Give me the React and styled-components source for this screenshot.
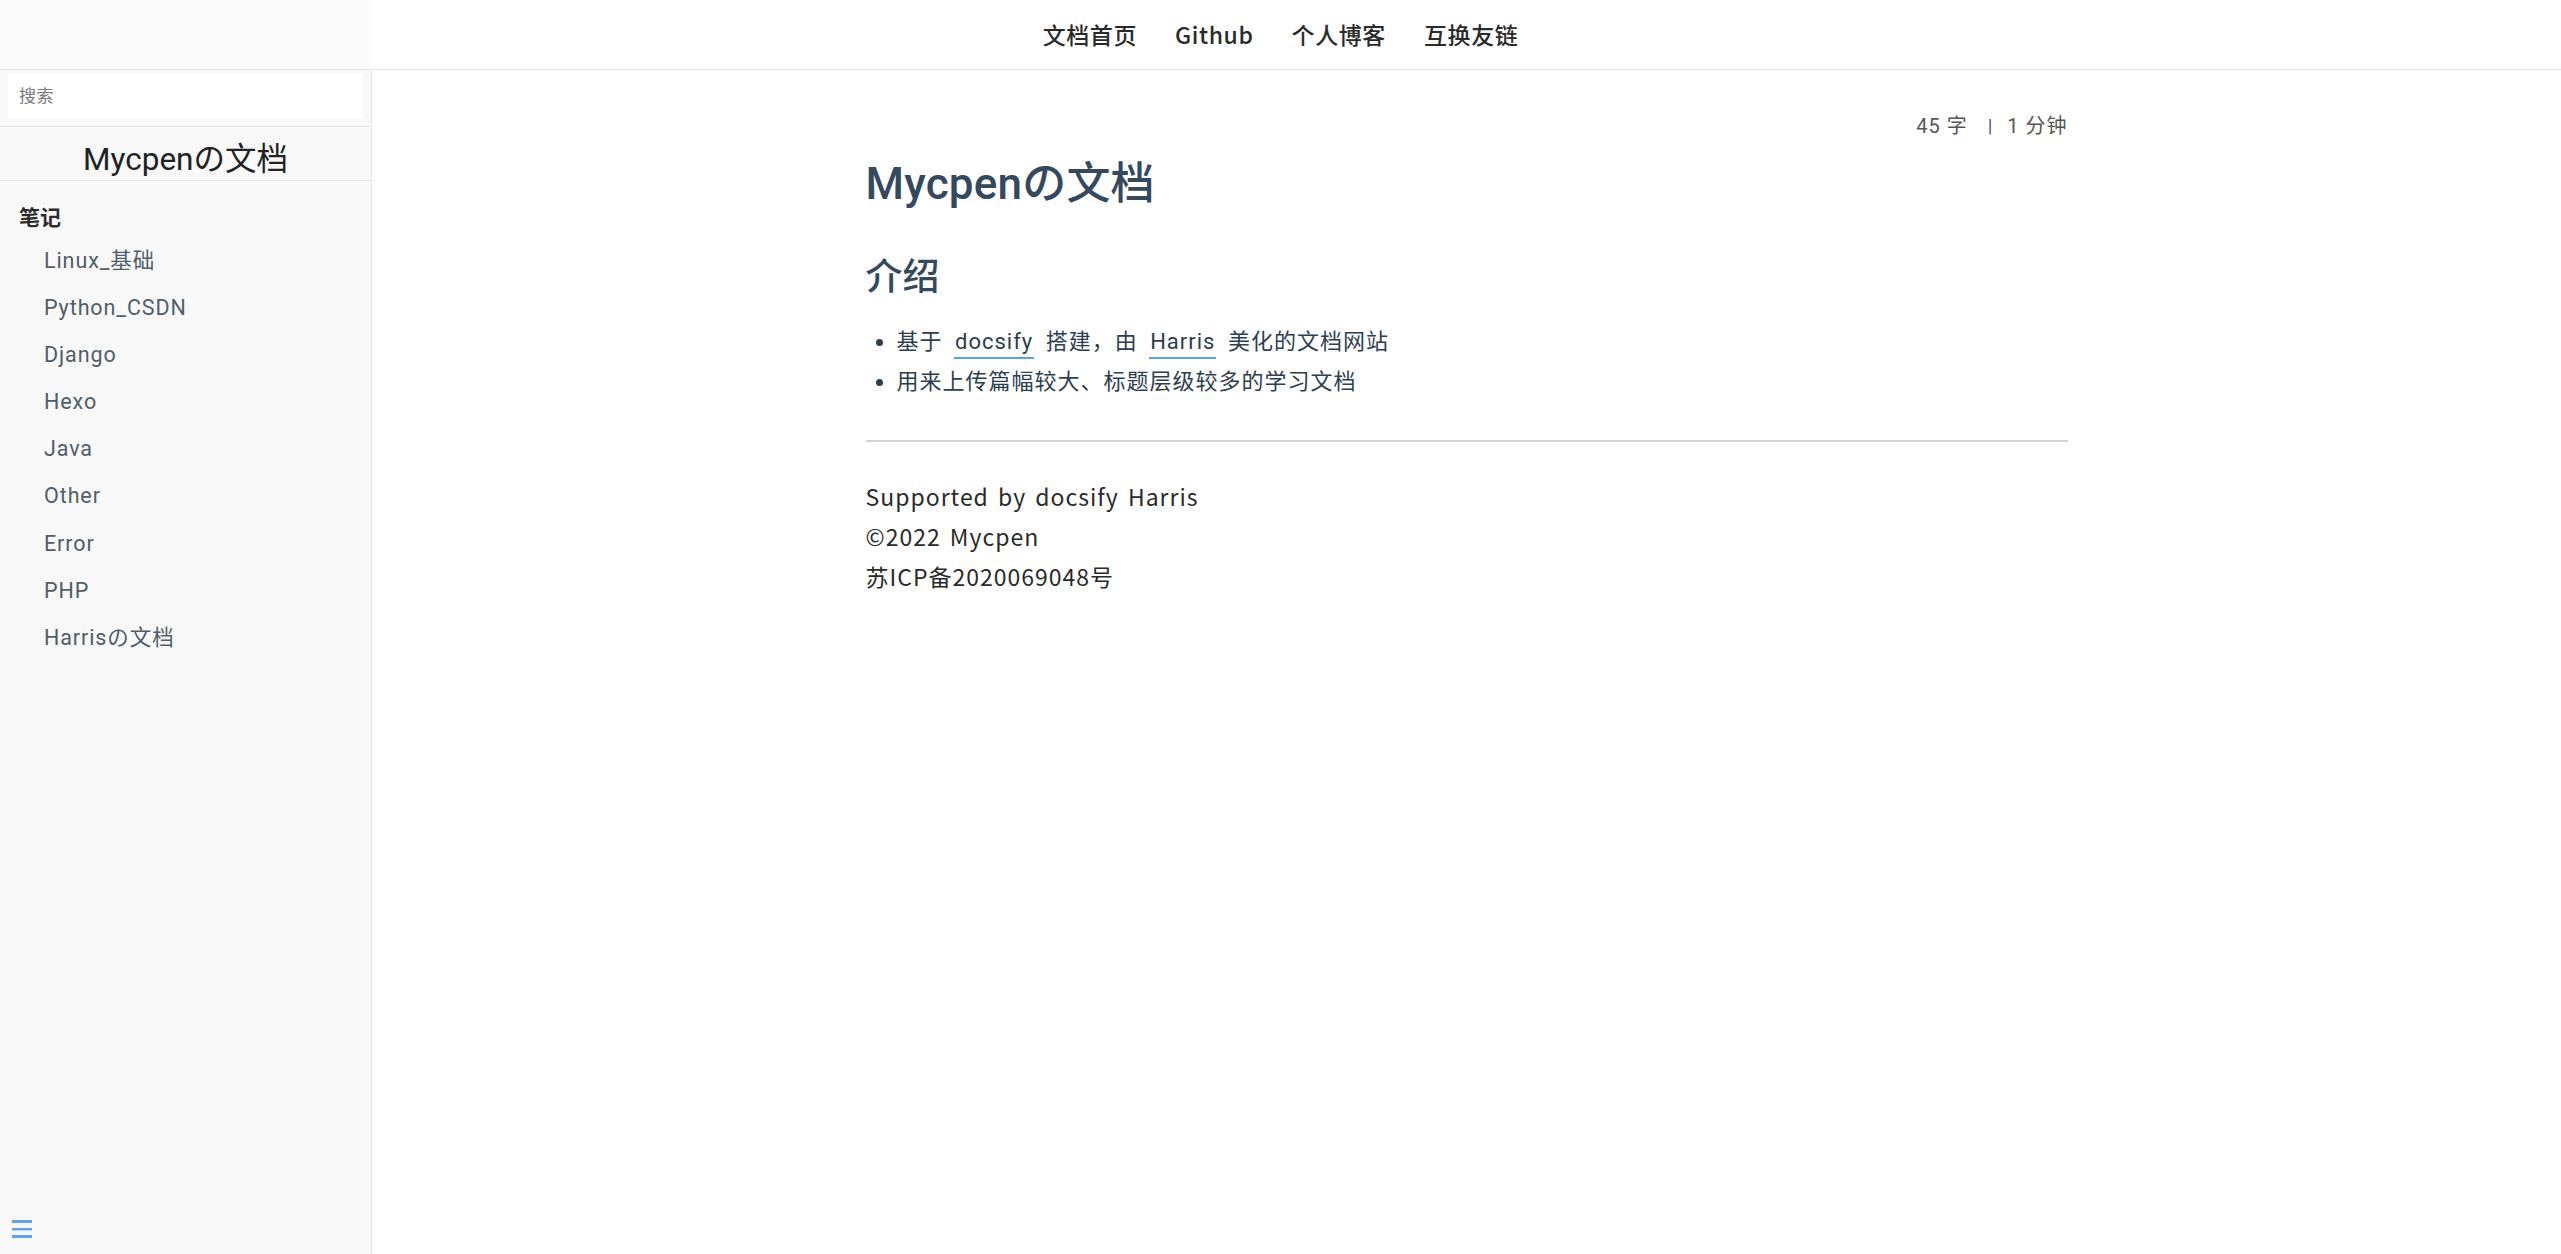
import styled, { createGlobalStyle } from 'styled-components';

const GlobalStyle = createGlobalStyle`
  html,
  body {
    margin: 0;
    padding: 0;
    background: #fff;
  }
  body {
    font-family: Roboto, 'Noto Sans CJK SC', sans-serif;
    -webkit-font-smoothing: antialiased;
  }
  #root {
    height: 100vh;
  }
`;

const Page = styled.div`
  display: flex;
  flex-direction: column;
  height: 100vh;
  overflow: hidden;
`;

const TopBar = styled.nav`
  flex-shrink: 0;
  box-sizing: border-box;
  height: 70px;
  padding-bottom: 2px;
  display: flex;
  align-items: center;
  justify-content: center;
  gap: 38px;
  border-bottom: 1px solid #dfe5ee;
  background: linear-gradient(to right, #fbfbfb 372px, #fff 372px);
`;

const NavLink = styled.a`
  display: block;
  line-height: 30px;
  font-family: 'Noto Sans CJK SC', Roboto, sans-serif;
  font-size: 23px;
  font-weight: 500;
  color: #2a2a2a;
  letter-spacing: 0.6px;
  text-decoration: none;
  cursor: pointer;
`;

const Body = styled.div`
  flex: 1;
  display: flex;
  min-height: 0;
`;

const Sidebar = styled.aside`
  width: 371px;
  flex-shrink: 0;
  display: flex;
  flex-direction: column;
  background: #f8f8f8;
  border-right: 1px solid #e6e6e6;
`;

const SearchWrap = styled.div`
  padding: 3px 8px 8px 8px;
  border-bottom: 1px solid #e6e6e6;
`;

const SearchInput = styled.input`
  display: block;
  box-sizing: border-box;
  width: 100%;
  height: 45px;
  border: none;
  outline: none;
  background: #fff;
  padding: 0 11px;
  font-family: Roboto, 'Noto Sans CJK SC', sans-serif;
  font-size: 17px;
  letter-spacing: 0.5px;
  color: #333;

  &::placeholder {
    color: #7a7a7a;
  }
`;

const SiteTitle = styled.h1`
  margin: 0;
  padding-top: 12px;
  line-height: 41px;
  font-size: 31.5px;
  font-weight: 400;
  color: #222;
  text-align: center;
  border-bottom: 1px solid #e6e6e6;
`;

const SectionLabel = styled.p`
  margin: 22px 0 0;
  padding-left: 19px;
  line-height: 30px;
  font-size: 21px;
  font-weight: 700;
  color: #2c2c2c;
`;

const NavList = styled.ul`
  list-style: none;
  margin: 0;
  padding: 4px 0 0;
`;

const NavItem = styled.li`
  padding-left: 44px;
  line-height: 47.1px;
  font-size: 21.5px;
  letter-spacing: 0.9px;
  color: #505d6b;
`;

const Toggle = styled.button`
  margin-top: auto;
  align-self: flex-start;
  border: none;
  background: none;
  padding: 0 0 16px 12px;
  display: flex;
  cursor: pointer;
`;

const Main = styled.main`
  flex: 1;
  min-width: 0;
  background: #fff;
`;

const Column = styled.section`
  width: 1202px;
  margin: 0 auto;
  padding-top: 41px;
`;

const WordCount = styled.div`
  display: flex;
  justify-content: flex-end;
  align-items: center;
  line-height: 30px;
  font-size: 20px;
  letter-spacing: 1px;
  color: #555;
`;

const Divider = styled.span`
  margin: 0 14px 0 20px;
  font-size: 19px;
`;

const Heading = styled.h1`
  margin: 13px 0 0;
  font-size: 44px;
  line-height: 60px;
  font-weight: 500;
  color: #34495e;
  letter-spacing: 0.2px;
`;

const SubHeading = styled.h2`
  margin: 39px 0 0;
  font-size: 37px;
  line-height: 50px;
  font-weight: 500;
  color: #34495e;
`;

const List = styled.ul`
  list-style: none;
  margin: 19px 0 0;
  padding: 0;
`;

const ListItem = styled.li`
  display: flex;
  align-items: center;
  line-height: 40px;
  font-size: 22px;
  letter-spacing: 1px;
  color: #2c3e50;

  &::before {
    content: '';
    width: 7px;
    height: 7px;
    border-radius: 50%;
    background: #2c3e50;
    margin: 0 14px 0 10px;
    flex-shrink: 0;
  }
`;

const TextLink = styled.a`
  color: #2c3e50;
  text-decoration: none;
  margin: 0 5px;
  padding: 0 1px 3px;
  border-bottom: 2px solid #5a9cf8;
`;

const Rule = styled.hr`
  margin: 38px 0 0;
  height: 2px;
  border: none;
  background: #d2d2d2;
`;

const Footer = styled.footer`
  margin-top: 34px;
  font-family: 'Noto Sans CJK SC', Roboto, sans-serif;
  font-size: 23px;
  line-height: 40px;
  color: #2a2a2a;
  letter-spacing: 1px;
  word-spacing: 3px;
`;

const FooterLine = styled.div``;

const navLinks = ['文档首页', 'Github', '个人博客', '互换友链'];
const docs = [
  'Linux_基础',
  'Python_CSDN',
  'Django',
  'Hexo',
  'Java',
  'Other',
  'Error',
  'PHP',
  'Harrisの文档',
];

function MenuIcon() {
  return (
    <svg width="20" height="18" viewBox="0 0 20 18" fill="#5fa2f9">
      <rect x="0" y="0" width="20" height="3" />
      <rect x="0" y="8" width="20" height="2.4" />
      <rect x="0" y="15" width="20" height="3" />
    </svg>
  );
}

export default function App() {
  return (
    <Page>
      <GlobalStyle />
      <TopBar>
        {navLinks.map((label) => (
          <NavLink key={label}>{label}</NavLink>
        ))}
      </TopBar>
      <Body>
        <Sidebar>
          <SearchWrap>
            <SearchInput type="search" placeholder="搜索" />
          </SearchWrap>
          <SiteTitle>Mycpenの文档</SiteTitle>
          <SectionLabel>笔记</SectionLabel>
          <NavList>
            {docs.map((name) => (
              <NavItem key={name}>{name}</NavItem>
            ))}
          </NavList>
          <Toggle aria-label="toggle sidebar">
            <MenuIcon />
          </Toggle>
        </Sidebar>
        <Main>
          <Column>
            <WordCount>
              <span>45 字</span>
              <Divider>|</Divider>
              <span>1 分钟</span>
            </WordCount>
            <Heading>Mycpenの文档</Heading>
            <SubHeading>介绍</SubHeading>
            <List>
              <ListItem>
                <span>
                  基于 <TextLink>docsify</TextLink> 搭建，由{' '}
                  <TextLink>Harris</TextLink> 美化的文档网站
                </span>
              </ListItem>
              <ListItem>
                <span>用来上传篇幅较大、标题层级较多的学习文档</span>
              </ListItem>
            </List>
            <Rule />
            <Footer>
              <FooterLine>Supported by docsify Harris</FooterLine>
              <FooterLine>©2022 Mycpen</FooterLine>
              <FooterLine>苏ICP备2020069048号</FooterLine>
            </Footer>
          </Column>
        </Main>
      </Body>
    </Page>
  );
}
